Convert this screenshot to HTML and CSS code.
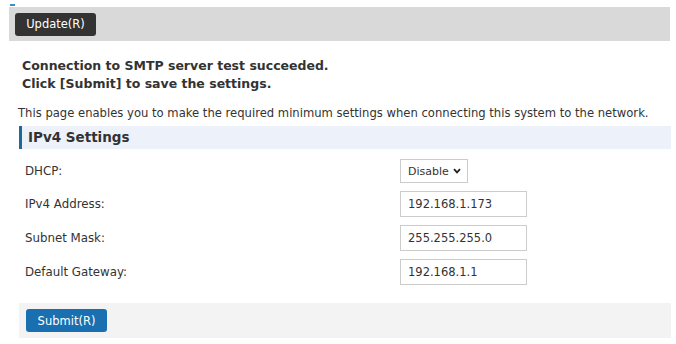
FILE: index.html
```html
<!DOCTYPE html>
<html lang="en">
<head>
    <meta charset="UTF-8">
    <meta name="viewport" content="width=device-width, initial-scale=1.0">
    <title>Network Settings</title>
    <link rel="stylesheet" href="styles.css">
</head>
<body>
    <div class="top-mark"></div>
    <div class="toolbar">
        <button class="update-button">Update(R)</button>
    </div>

    <div class="message">
        <p>Connection to SMTP server test succeeded.</p>
        <p>Click [Submit] to save the settings.</p>
    </div>

    <p class="description">This page enables you to make the required minimum settings when connecting this system to the network.</p>

    <h2 class="section-title">IPv4 Settings</h2>

    <div class="settings">
        <div class="setting-row">
            <label class="setting-label">DHCP:</label>
            <div class="select-box">
                <span>Disable</span>
                <svg width="8" height="6" viewBox="0 0 8 6"><path d="M1 1.2 L4 4.4 L7 1.2" fill="none" stroke="#222" stroke-width="1.8"/></svg>
            </div>
        </div>
        <div class="setting-row">
            <label class="setting-label">IPv4 Address:</label>
            <input class="text-input" type="text" value="192.168.1.173">
        </div>
        <div class="setting-row">
            <label class="setting-label">Subnet Mask:</label>
            <input class="text-input" type="text" value="255.255.255.0">
        </div>
        <div class="setting-row">
            <label class="setting-label">Default Gateway:</label>
            <input class="text-input" type="text" value="192.168.1.1">
        </div>
    </div>

    <div class="footer-bar">
        <button class="submit-button">Submit(R)</button>
    </div>
</body>
</html>
```

FILE: styles.css
```css
* {
    box-sizing: border-box;
    margin: 0;
    padding: 0;
}

body {
    font-family: "DejaVu Sans", Verdana, sans-serif;
    color: #333;
    background-color: #fff;
    width: 676px;
}

.top-mark {
    width: 5px;
    height: 2px;
    margin: 4px 0 0 10px;
    background-color: #3a8fc6;
}

.toolbar {
    display: flex;
    align-items: center;
    margin: 1px 6px 0 9px;
    height: 34px;
    padding: 0 6px;
    background-color: #d9d9d9;
}

.update-button {
    background-color: #333;
    color: #fff;
    border: none;
    border-radius: 3px;
    font-family: "DejaVu Sans", Verdana, sans-serif;
    font-size: 11.5px;
    height: 23px;
    width: 81px;
}

.message {
    margin: 16px 0 0 22px;
    font-size: 12.5px;
    font-weight: bold;
    line-height: 18px;
}

.description {
    margin: 12px 0 0 18px;
    font-size: 11.6px;
    line-height: 16px;
}

.section-title {
    margin: 5px 5px 0 19px;
    height: 23px;
    line-height: 23px;
    padding-left: 6px;
    border-left: 3px solid #1b6a9c;
    background-color: #edf1fa;
    font-family: "DejaVu Sans", Tahoma, sans-serif;
    font-size: 13.5px;
    font-weight: bold;
}

.settings {
    display: flex;
    flex-direction: column;
    gap: 8px;
    margin: 10px 0 0 25px;
}

.setting-row {
    display: flex;
    align-items: center;
}

.setting-label {
    width: 375px;
    font-size: 11.8px;
}

.select-box {
    display: flex;
    align-items: center;
    justify-content: space-between;
    width: 68px;
    height: 24px;
    padding: 0 6px 0 7px;
    border: 1px solid #ccc;
    font-size: 11px;
}

.text-input {
    width: 127px;
    height: 26px;
    padding-left: 7px;
    border: 1px solid #ccc;
    color: #333;
    font-family: "DejaVu Sans", Verdana, sans-serif;
    font-size: 11.5px;
}

.footer-bar {
    display: flex;
    align-items: center;
    margin: 18px 5px 0 19px;
    height: 35px;
    padding-left: 7px;
    background-color: #f3f3f3;
}

.submit-button {
    background-color: #1a6fb0;
    color: #fff;
    border: none;
    border-radius: 3px;
    font-family: "DejaVu Sans", Verdana, sans-serif;
    font-size: 11.5px;
    height: 23px;
    width: 81px;
}
```
